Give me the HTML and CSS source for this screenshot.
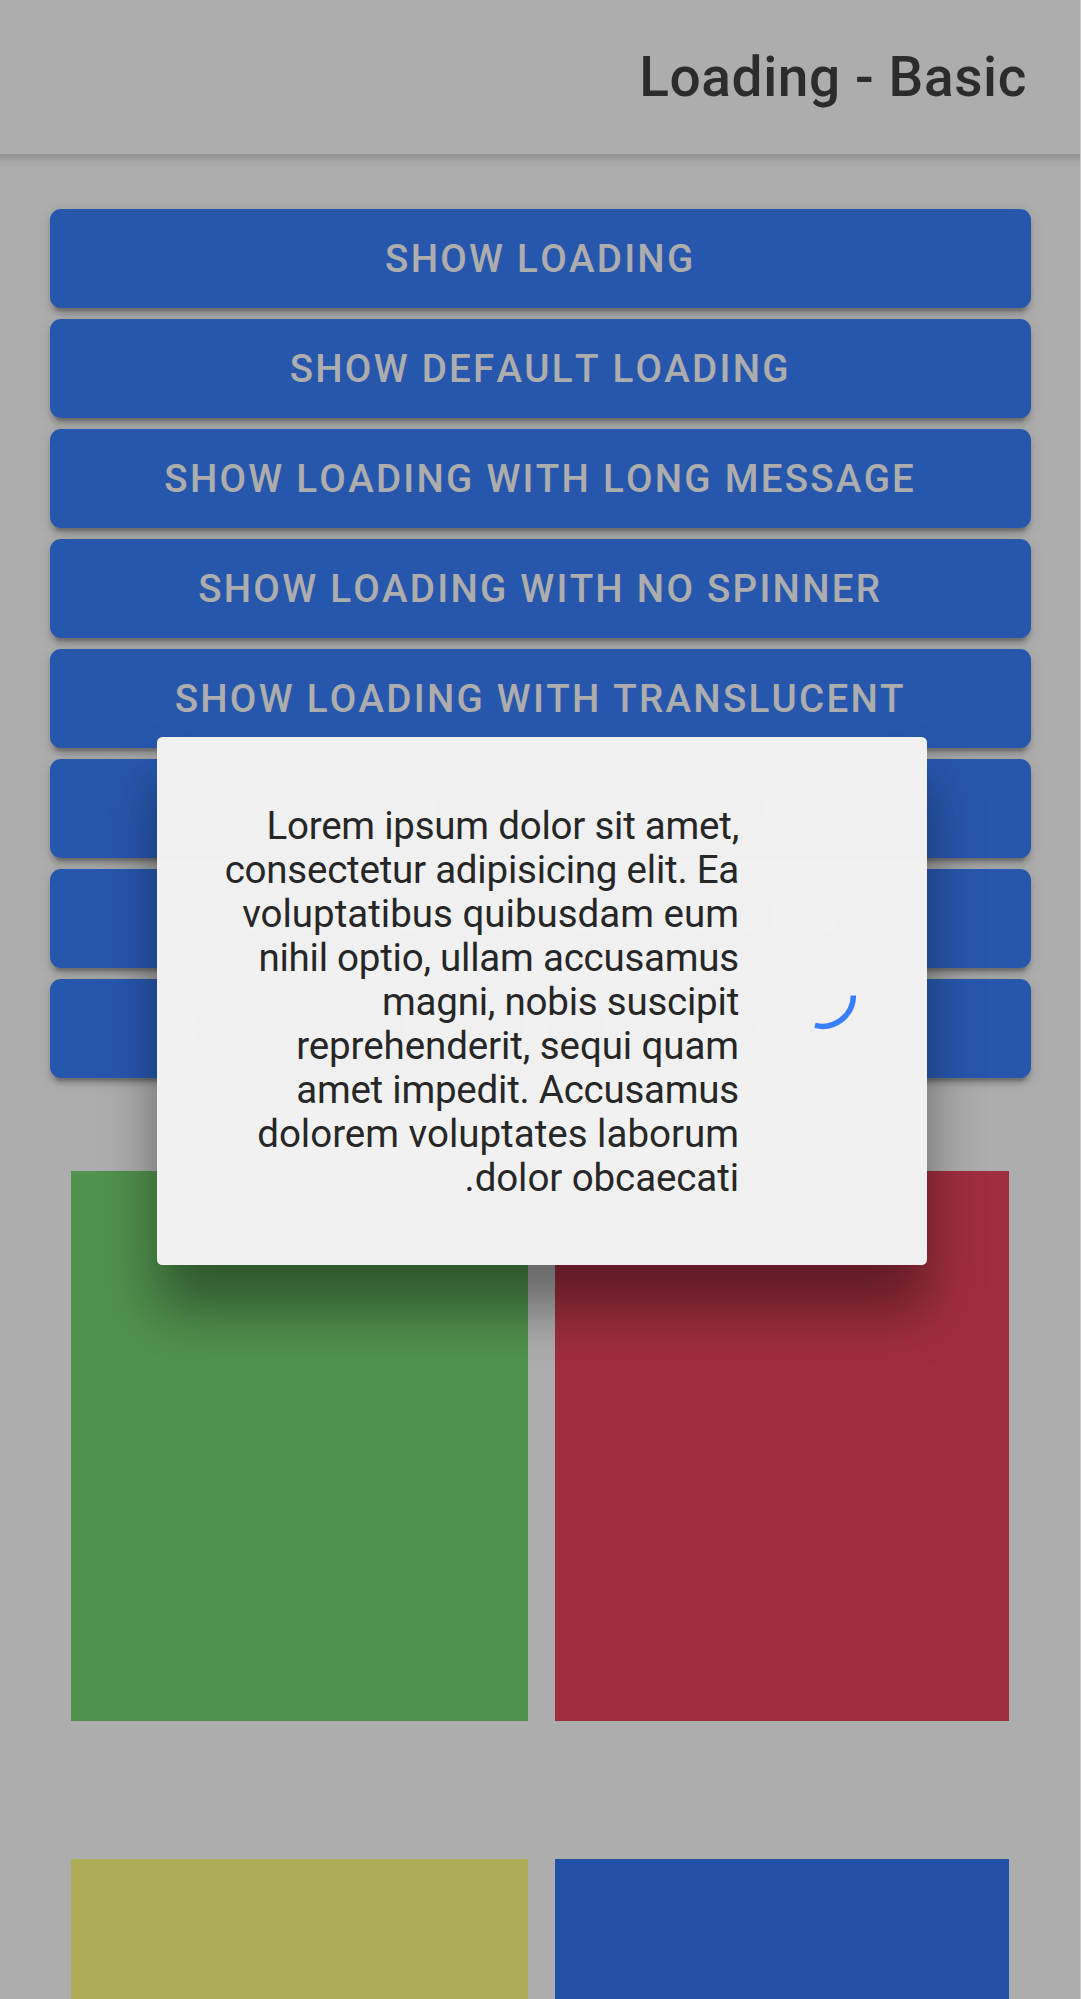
FILE: index.html
```html
<!DOCTYPE html>
<html lang="en" dir="rtl">
<head>
<meta charset="utf-8">
<title>Loading - Basic</title>
<link rel="stylesheet" href="styles.css">
</head>
<body>
<div class="app">
  <header class="header"><h1 class="title">Loading - Basic</h1></header>
  <main class="content">
    <div class="buttons">
      <button class="button">Show Loading</button>
      <button class="button">Show Default Loading</button>
      <button class="button">Show Loading with Long Message</button>
      <button class="button">Show Loading with no Spinner</button>
      <button class="button">Show Loading with Translucent</button>
      <button class="button">Show Loading with cssClass</button>
      <button class="button">Show Set Content Loading</button>
      <button class="button">Show Loading with HTML Content</button>
    </div>
    <div class="grid">
      <div class="tile red"></div>
      <div class="tile green"></div>
      <div class="tile blue"></div>
      <div class="tile yellow"></div>
    </div>
  </main>
  <div class="backdrop"></div>
  <div class="overlay">
    <div class="loading" role="dialog">
      <svg class="spinner" viewBox="0 0 77 77"><path d="M69.4 32.5A31 31 0 0 1 31 62.4"/></svg>
      <p class="message">Lorem ipsum dolor sit amet,&lrm;<br>consectetur adipisicing elit. Ea<br><span class="wide">voluptatibus quibusdam eum</span><br>nihil optio, ullam accusamus<br>magni, nobis suscipit<br><span class="medium">reprehenderit, sequi quam</span><br>amet impedit. Accusamus<br><span class="wide">dolorem voluptates laborum</span><br><span class="medium">dolor obcaecati.</span></p>
    </div>
  </div>
</div>
</body>
</html>
```
FILE: styles.css
```css
* { box-sizing: border-box; }
html, body { margin: 0; height: 100%; overflow: hidden; background: #c8c8c8; }
body { font-family: Roboto, "Liberation Sans", sans-serif; direction: ltr; }
.app { position: relative; width: 1080px; height: 1999px; overflow: hidden; direction: rtl; background: #fff; }
.header { height: 154px; padding: 0 53px; display: flex; align-items: center; }
.title { margin: 0; font-size: 55px; font-weight: 500; letter-spacing: 0.6px; line-height: 66px; color: #424242; }
.content { height: 1845px; padding: 55px 49px 0 49.5px; overflow: hidden; background: linear-gradient(#d8d8d8, #e4e4e4 4px, #f6f6f6 8px, #fff 14px) top / 100% 14px no-repeat; }
.buttons { display: flex; flex-direction: column; gap: 11px; }
.button { height: 99px; border: 0; border-radius: 11px; background: #3880ff; color: #fff; font: 500 38.5px Roboto, sans-serif; font-kerning: none; letter-spacing: 2.27px; text-transform: uppercase;
  box-shadow: 0 8.25px 2.75px -5.5px rgba(0,0,0,.2), 0 5.5px 5.5px rgba(0,0,0,.14), 0 2.75px 13.75px rgba(0,0,0,.12); }
.grid { display: grid; grid-template-columns: 454px 456.5px; column-gap: 27.5px; row-gap: 137.5px; padding: 93px 22px 0; }
.tile { height: 550px; }
.red { background: #eb445a; }
.green { background: #76d672; }
.blue { background: #3478f6; }
.yellow { background: #ffff80; }
.backdrop { position: absolute; inset: 0; background: #000; opacity: .32; }
.overlay { position: absolute; inset: 0; display: flex; align-items: center; justify-content: center; padding: 3px 0 0 4px; }
.loading { display: flex; align-items: center; gap: 45px; width: 770px; height: 528px; padding: 66px; border-radius: 5.5px; background: #f2f2f2; opacity: .992; box-shadow: 0 44px 55px rgba(0,0,0,.4); }
.spinner { flex: none; width: 77px; height: 77px; fill: none; stroke: #3880ff; stroke-width: 5.5; }
.message { margin: 0; padding-top: 2px; font-size: 38.5px; line-height: 44px; letter-spacing: -0.23px; white-space: nowrap; color: #262626; }
.message .wide { letter-spacing: 0; }
.message .medium { letter-spacing: -0.09px; }
```
